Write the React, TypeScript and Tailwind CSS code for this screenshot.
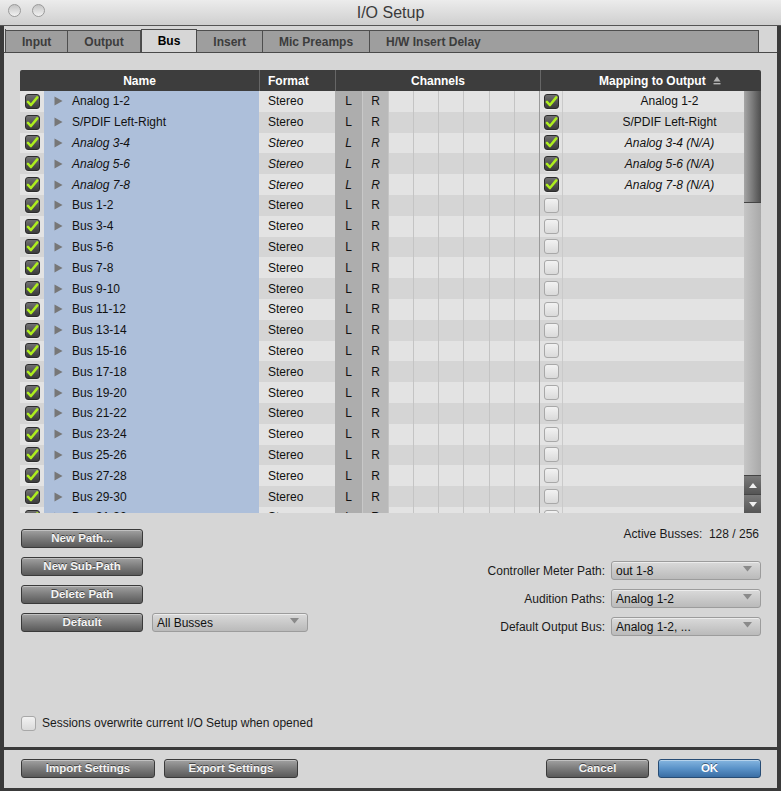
import React from "react";

type Row = { name: string; italic: boolean; map: string; mapped: boolean };

const rows: Row[] = [
  { name: "Analog 1-2", italic: false, map: "Analog 1-2", mapped: true },
  { name: "S/PDIF Left-Right", italic: false, map: "S/PDIF Left-Right", mapped: true },
  { name: "Analog 3-4", italic: true, map: "Analog 3-4 (N/A)", mapped: true },
  { name: "Analog 5-6", italic: true, map: "Analog 5-6 (N/A)", mapped: true },
  { name: "Analog 7-8", italic: true, map: "Analog 7-8 (N/A)", mapped: true },
  ...Array.from({ length: 16 }, (_, i) => ({
    name: `Bus ${i * 2 + 1}-${i * 2 + 2}`,
    italic: false,
    map: "",
    mapped: false,
  })),
];

function Check({ on }: { on: boolean }) {
  if (on) {
    return (
      <div className="w-[15px] h-[15px] rounded-[3px] border border-[#2c2c2c] bg-gradient-to-b from-[#707070] to-[#3c3c3c] flex items-center justify-center shadow-[0_1px_0_rgba(255,255,255,0.4)]">
        <svg width="13" height="13" viewBox="0 0 12 12">
          <path
            d="M1.8 6.4 L4.6 9.3 L10.4 2.2"
            stroke="#aeee1e"
            strokeWidth="2.3"
            fill="none"
            strokeLinecap="round"
            strokeLinejoin="round"
          />
        </svg>
      </div>
    );
  }
  return (
    <div className="w-[15px] h-[15px] rounded-[3px] border border-[#a8a8a8] bg-gradient-to-b from-[#f2f2f2] to-[#dadada]" />
  );
}

function DarkButton({ label, w }: { label: string; w: string }) {
  return (
    <div
      className={`${w} h-[19px] rounded-[3px] border border-[#3a3a3a] bg-gradient-to-b from-[#a2a2a2] via-[#7c7c7c] to-[#5a5a5a] shadow-[inset_0_1px_0_rgba(255,255,255,0.35)] flex items-center justify-center text-[#f4f4f4] font-bold text-[11.5px] [text-shadow:0_-1px_0_rgba(0,0,0,0.55)]`}
    >
      {label}
    </div>
  );
}

function Dropdown({ label, w }: { label: string; w: string }) {
  return (
    <div
      className={`${w} relative h-[19px] rounded-[3px] border border-[#9c9c9c] bg-gradient-to-b from-[#dadada] to-[#bababa] shadow-[inset_0_1px_0_rgba(255,255,255,0.5)] flex items-center pl-[4px] text-[12px] text-[#111]`}
    >
      {label}
      <svg className="absolute right-[8px] top-[4px]" width="9" height="6" viewBox="0 0 9 6">
        <path d="M0 0 H9 L4.5 5.5 Z" fill="#8a8a8a" />
      </svg>
    </div>
  );
}

function Tab({ label, active, grow }: { label: string; active?: boolean; grow?: boolean }) {
  if (active) {
    return (
      <div className="h-[23px] px-[16px] flex items-center bg-[#d6d6d6] border-t border-x border-[#4a4a4a] -mb-px relative z-10 text-[12px] font-bold text-black">
        {label}
      </div>
    );
  }
  return (
    <div
      className={`${grow ? "flex-1" : ""} h-[22px] mt-px px-[16px] flex items-center bg-[#9e9e9e] border-t border-r border-[#4e4e4e] text-[12px] font-bold text-[#3c3c3c]`}
    >
      {label}
    </div>
  );
}

function TableRow({ r, i }: { r: Row; i: number }) {
  const light = i % 2 === 0;
  const rowBg = light ? "bg-[#e3e3e3]" : "bg-[#d5d5d5]";
  const it = r.italic ? "italic" : "";
  return (
    <div className={`flex h-[20.8px] shrink-0 text-[12px] text-[#111] ${rowBg}`}>
      <div className="w-[24px] flex items-center justify-center">
        <Check on />
      </div>
      <div className={`w-[215px] bg-[#adbfda] flex items-center pl-[10px] ${it}`}>
        <svg width="9" height="10" viewBox="0 0 9 10" className="not-italic">
          <path d="M0.5 0.5 L8.5 5 L0.5 9.5 Z" fill="#777" />
        </svg>
        <span className="ml-[9px]">{r.name}</span>
      </div>
      <div className={`w-[76px] flex items-center pl-[9px] ${it}`}>Stereo</div>
      <div className={`w-[27px] bg-[#adadad] flex items-center justify-center ${it}`}>L</div>
      <div className={`w-[26px] bg-[#b9b9b9] border-l border-[#c8c8c8] flex items-center justify-center ${it}`}>R</div>
      <div className="w-[25px] border-l border-[#c4c4c4]" />
      <div className="w-[25px] border-l border-[#c4c4c4]" />
      <div className="w-[25px] border-l border-[#c4c4c4]" />
      <div className="w-[26px] border-l border-[#c4c4c4]" />
      <div className="w-[25px] border-l border-[#c4c4c4]" />
      <div className="w-[25px] border-l border-[#c4c4c4]" />
      <div className="w-[23px] border-l border-[#9a9a9a] flex items-center justify-center">
        <Check on={r.mapped} />
      </div>
      <div className={`w-[181px] border-l border-[#cacaca] flex items-center justify-center pl-[33px] ${it}`}>
        {r.map}
      </div>
    </div>
  );
}

export default function App() {
  return (
    <div className="w-[781px] h-[791px] bg-[#3a3a3a] flex flex-col font-['Liberation_Sans',Arial,sans-serif] overflow-hidden select-none">
      {/* title bar */}
      <div className="h-[26px] shrink-0 relative flex items-center justify-center bg-gradient-to-b from-[#ececec] to-[#cfcfcf] border-b border-[#555]">
        <div className="absolute left-[8px] top-[4px] flex gap-[11px]">
          <div className="w-[13px] h-[13px] rounded-full border border-[#9a9a9a] bg-gradient-to-b from-[#c4c4c4] to-[#f2f2f2]" />
          <div className="w-[13px] h-[13px] rounded-full border border-[#9a9a9a] bg-gradient-to-b from-[#c4c4c4] to-[#f2f2f2]" />
        </div>
        <span className="text-[16px] text-[#3a3a3a]">I/O Setup</span>
      </div>

      <div className="flex-1 mx-[4px] flex flex-col">
        {/* tabs */}
        <div className="h-[27px] shrink-0 bg-[#d6d6d6] pt-[4px] pl-px pr-[18px] flex items-end border-b border-[#4a4a4a]">
          <div className="flex flex-1 border-l border-[#4e4e4e] h-[23px]">
            <Tab label="Input" />
            <Tab label="Output" />
            <Tab label="Bus" active />
            <Tab label="Insert" />
            <Tab label="Mic Preamps" />
            <Tab label="H/W Insert Delay" grow />
          </div>
        </div>

        {/* main panel */}
        <div className="flex-1 bg-[#d6d6d6] flex flex-col px-[16px] pt-[17px]">
          {/* table */}
          <div className="w-[741px] flex flex-col">
            <div className="h-[21px] flex bg-[#3d3d3d] rounded-t-[2px] text-white font-bold text-[12px]">
              <div className="w-[239px] flex items-center justify-center">Name</div>
              <div className="w-[76px] border-l border-[#666] flex items-center pl-[8px]">Format</div>
              <div className="w-[205px] border-l border-[#666] flex items-center justify-center">Channels</div>
              <div className="flex-1 border-l border-[#666] flex items-center pl-[58px]">
                Mapping to Output
                <svg className="ml-[7px]" width="8" height="9" viewBox="0 0 8 9">
                  <path d="M4 0.5 L7.5 5.5 H0.5 Z" fill="#b5b5b5" />
                  <rect x="0.5" y="7" width="7" height="1.4" fill="#b5b5b5" />
                </svg>
              </div>
            </div>
            <div className="flex h-[422px]">
              <div className="w-[724px] flex flex-col overflow-hidden">
                {rows.map((r, i) => (
                  <TableRow key={r.name} r={r} i={i} />
                ))}
              </div>
              {/* scroll bar */}
              <div className="w-[17px] flex flex-col">
                <div className="h-[112px] bg-gradient-to-r from-[#a6a6a6] via-[#7a7a7a] to-[#4e4e4e] border-b border-[#444]" />
                <div className="flex-1 bg-gradient-to-r from-[#c6c6c6] to-[#a9a9a9]" />
                <div className="h-[19px] bg-gradient-to-b from-[#7a7a7a] to-[#555] border-t border-[#444] flex items-center justify-center">
                  <svg width="8" height="5" viewBox="0 0 8 5">
                    <path d="M4 0 L8 5 H0 Z" fill="#f0f0f0" />
                  </svg>
                </div>
                <div className="h-[19px] bg-gradient-to-b from-[#7a7a7a] to-[#555] border-t border-[#444] flex items-center justify-center">
                  <svg width="8" height="5" viewBox="0 0 8 5">
                    <path d="M0 0 H8 L4 5 Z" fill="#f0f0f0" />
                  </svg>
                </div>
              </div>
            </div>
          </div>

          {/* controls */}
          <div className="flex justify-between">
            <div className="flex flex-col gap-[9px] mt-[16px] ml-px">
              <DarkButton label="New Path..." w="w-[122px]" />
              <DarkButton label="New Sub-Path" w="w-[122px]" />
              <DarkButton label="Delete Path" w="w-[122px]" />
              <div className="flex gap-[9px]">
                <DarkButton label="Default" w="w-[122px]" />
                <Dropdown label="All Busses" w="w-[156px]" />
              </div>
            </div>
            <div className="flex flex-col items-end mt-[14px] text-[12px] text-[#1a1a1a]">
              <div className="h-[14px] leading-[14px] whitespace-pre mr-[2px]">Active Busses:  128 / 256</div>
              <div className="flex flex-col items-end gap-[9px] mt-[20px]">
                <div className="flex items-center gap-[6px]">
                  <span>Controller Meter Path:</span>
                  <Dropdown label="out 1-8" w="w-[150px]" />
                </div>
                <div className="flex items-center gap-[6px]">
                  <span>Audition Paths:</span>
                  <Dropdown label="Analog 1-2" w="w-[150px]" />
                </div>
                <div className="flex items-center gap-[6px]">
                  <span>Default Output Bus:</span>
                  <Dropdown label="Analog 1-2, ..." w="w-[150px]" />
                </div>
              </div>
            </div>
          </div>

          <div className="mt-auto mb-[15px] ml-px flex items-center gap-[6px] text-[12px] text-[#1a1a1a]">
            <Check on={false} />
            <span>Sessions overwrite current I/O Setup when opened</span>
          </div>
        </div>

        <div className="h-[3px] shrink-0 bg-[#3a3a3a]" />

        {/* bottom bar */}
        <div className="h-[38px] shrink-0 bg-[#d6d6d6] flex items-start pt-[9px] px-[16px]">
          <div className="flex gap-[9px] ml-px">
            <DarkButton label="Import Settings" w="w-[134px]" />
            <DarkButton label="Export Settings" w="w-[134px]" />
          </div>
          <div className="ml-auto flex gap-[9px]">
            <DarkButton label="Cancel" w="w-[103px]" />
            <div className="w-[103px] h-[19px] rounded-[3px] border border-[#274c74] bg-gradient-to-b from-[#86b6e0] via-[#5a92c8] to-[#3a6ea4] shadow-[inset_0_1px_0_rgba(255,255,255,0.4)] flex items-center justify-center text-white font-bold text-[11.5px] [text-shadow:0_-1px_0_rgba(0,0,0,0.45)]">
              OK
            </div>
          </div>
        </div>
      </div>
      <div className="h-[3px] shrink-0" />
    </div>
  );
}
